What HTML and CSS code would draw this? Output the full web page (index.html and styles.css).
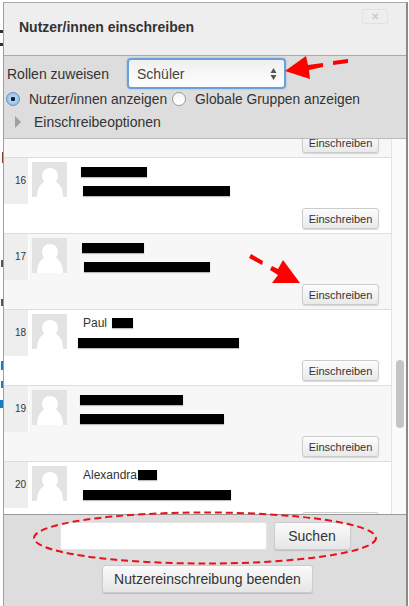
FILE: index.html
```html
<!DOCTYPE html>
<html lang="de">
<head>
<meta charset="UTF-8">
<meta name="viewport" content="width=device-width, initial-scale=1.0">
<title>Nutzer/innen einschreiben</title>
<link rel="stylesheet" href="styles.css">
</head>
<body>
<div class="page-bits">
  <i class="bit bit-a"></i>
  <i class="bit bit-b"></i>
  <i class="bit bit-c"></i>
  <i class="bit bit-d"></i>
  <i class="bit bit-e"></i>
  <i class="bit bit-f"></i>
  <i class="bit bit-g"></i>
  <i class="bit bit-h"></i>
</div>
<div class="dialog">
  <div class="dialog-head">
    <h1>Nutzer/innen einschreiben</h1>
    <span class="close">&#10005;</span>
  </div>
  <div class="toolbar">
    <div class="role-row">
      <label>Rollen zuweisen</label>
      <div class="select">
        <span>Schüler</span>
        <svg width="7" height="12" viewBox="0 0 7 12"><path d="M3.5 0 L6.5 5 H0.5 Z M3.5 12 L0.5 7 H6.5 Z" fill="#555"/></svg>
      </div>
      <svg class="arrow-role" width="68" height="28" viewBox="0 0 68 28">
        <path d="M0 16 L21 1 L23 10 L38 8 L38 12 L24 15 L25 24 Z" fill="#f00"/>
        <path d="M48 6 L63 4 L63 8 L48 10 Z" fill="#f00"/>
      </svg>
    </div>
    <div class="radio-row">
      <span class="radio checked"></span><span class="radio-label">Nutzer/innen anzeigen</span>
      <span class="radio"></span><span class="radio-label">Globale Gruppen anzeigen</span>
    </div>
    <div class="options-row">
      <span class="triangle"></span>
      <span>Einschreibeoptionen</span>
    </div>
  </div>
  <div class="list">
    <div class="list-inner">
      <div class="row-end alt">
        <button class="enrol">Einschreiben</button>
      </div>
      <div class="row">
        <div class="num">16</div>
        <svg class="avatar" viewBox="0 0 35 35"><rect width="35" height="35" fill="#e3e3e3"/><circle cx="18" cy="14" r="8" fill="#fff"/><path d="M5 35 C5 24 11 18 18 18 C25 18 31 24 31 35 Z" fill="#fff"/></svg>
        <div class="info">
          <div class="line name"><i class="bar" style="width:66px;margin-left:-2px"></i></div>
          <div class="line mail"><i class="bar" style="width:147px;margin-left:0"></i></div>
        </div>
        <button class="enrol">Einschreiben</button>
      </div>
      <div class="row alt">
        <div class="num">17</div>
        <svg class="avatar" viewBox="0 0 35 35"><rect width="35" height="35" fill="#e3e3e3"/><circle cx="18" cy="14" r="8" fill="#fff"/><path d="M5 35 C5 24 11 18 18 18 C25 18 31 24 31 35 Z" fill="#fff"/></svg>
        <div class="info">
          <div class="line name"><i class="bar" style="width:62px;margin-left:-1px"></i></div>
          <div class="line mail"><i class="bar" style="width:126px;margin-left:1px"></i></div>
        </div>
        <button class="enrol">Einschreiben</button>
        <svg class="arrow-enrol" width="54" height="32" viewBox="0 0 54 32">
          <path d="M0 4 L2 0 L14 7 L13 11 Z" fill="#f00"/>
          <path d="M21 16 L23 12 L29 15 L34 6 L51 29 L23 29 L29 21 Z" fill="#f00"/>
        </svg>
      </div>
      <div class="row">
        <div class="num">18</div>
        <svg class="avatar" viewBox="0 0 35 35"><rect width="35" height="35" fill="#e3e3e3"/><circle cx="18" cy="14" r="8" fill="#fff"/><path d="M5 35 C5 24 11 18 18 18 C25 18 31 24 31 35 Z" fill="#fff"/></svg>
        <div class="info">
          <div class="line name-text">Paul <i class="bar inline" style="width:21px;margin-left:2px"></i></div>
          <div class="line mail"><i class="bar" style="width:161px;margin-left:-5px"></i></div>
        </div>
        <button class="enrol">Einschreiben</button>
      </div>
      <div class="row alt">
        <div class="num">19</div>
        <svg class="avatar" viewBox="0 0 35 35"><rect width="35" height="35" fill="#e3e3e3"/><circle cx="18" cy="14" r="8" fill="#fff"/><path d="M5 35 C5 24 11 18 18 18 C25 18 31 24 31 35 Z" fill="#fff"/></svg>
        <div class="info">
          <div class="line name"><i class="bar" style="width:103px;margin-left:-3px"></i></div>
          <div class="line mail"><i class="bar" style="width:144px;margin-left:-3px"></i></div>
        </div>
        <button class="enrol">Einschreiben</button>
      </div>
      <div class="row">
        <div class="num">20</div>
        <svg class="avatar" viewBox="0 0 35 35"><rect width="35" height="35" fill="#e3e3e3"/><circle cx="18" cy="14" r="8" fill="#fff"/><path d="M5 35 C5 24 11 18 18 18 C25 18 31 24 31 35 Z" fill="#fff"/></svg>
        <div class="info">
          <div class="line name-text">Alexandra<i class="bar inline" style="width:19px;margin-left:1px"></i></div>
          <div class="line mail"><i class="bar" style="width:148px;margin-left:0"></i></div>
        </div>
        <button class="enrol"></button>
      </div>
    </div>
    <div class="scroll-thumb"></div>
  </div>
  <div class="dialog-foot">
    <div class="search-row">
      <input class="search" type="text">
      <button class="foot-btn search-btn">Suchen</button>
      <svg class="ellipse" width="346" height="56" viewBox="0 0 346 56"><ellipse cx="172" cy="28" rx="171" ry="25.5" fill="none" stroke="#e8101a" stroke-width="2" stroke-dasharray="7 4"/></svg>
    </div>
    <button class="foot-btn finish">Nutzereinschreibung beenden</button>
  </div>
</div>
</body>
</html>
```

FILE: styles.css
```css
html, body {
  margin: 0;
  height: 100%;
  overflow: hidden;
}
body {
  font-family: "Liberation Sans", Arial, sans-serif;
  background-color: #fff;
  color: #333;
  padding: 2px 0 0 3px;
  box-sizing: border-box;
}

/* reste der seite hinter dem dialog */
.bit {
  position: absolute;
  left: 0;
  width: 3px;
}
.bit-a { top: 30px; height: 3px; background-color: #333; }
.bit-b { top: 43px; height: 3px; background-color: #333; }
.bit-c { top: 152px; left: 2px; width: 1px; height: 11px; background-color: #8a3a2a; }
.bit-d { top: 260px; left: 1px; width: 2px; height: 7px; background-color: #555; }
.bit-e { top: 299px; left: 1px; width: 2px; height: 7px; background-color: #555; }
.bit-f { top: 361px; left: 1px; width: 2px; height: 9px; background-color: #1a7cc0; }
.bit-g { top: 381px; left: 1px; width: 2px; height: 7px; background-color: #1a7cc0; }
.bit-h { top: 400px; height: 8px; background-color: #1a7cc0; }

.dialog {
  width: 405px;
  height: 604px;
  box-sizing: border-box;
  border-left: 1px solid #a0a0a0;
  border-right: 2px solid #8a8a8a;
  border-top: 1px solid #a8a8a8;
  display: flex;
  flex-direction: column;
}
.dialog-head {
  height: 52px;
  flex: none;
  background-color: #eee;
  border-bottom: 1px solid #aaa;
  display: flex;
  justify-content: space-between;
  padding: 0 18px 0 15px;
}
.dialog-head h1 {
  margin: 14px 0 0;
  font-size: 14px;
  line-height: 20px;
  font-weight: 700;
  color: #333;
}
.close {
  width: 24px;
  height: 13px;
  margin-top: 6px;
  border: 1px solid #e2e2e2;
  border-radius: 2px;
  font-size: 10px;
  line-height: 13px;
  text-align: center;
  color: #ccc;
  font-weight: 700;
}

/* rollen und anzeige */
.toolbar {
  height: 83px;
  flex: none;
  background-color: #ddd;
  border-bottom: 1px solid #bbb;
  font-size: 14px;
  color: #333;
  padding: 1px 0 0 3px;
  box-sizing: border-box;
}
.role-row {
  display: flex;
  align-items: center;
  height: 33px;
}
.role-row label {
  width: 120px;
  font-size: 14px;
}
.select {
  width: 159px;
  height: 31px;
  flex: none;
  box-sizing: border-box;
  border: 2px solid #6c9fd8;
  border-radius: 4px;
  background: linear-gradient(#efefef, #fff);
  display: flex;
  align-items: center;
  justify-content: space-between;
  padding: 0 7px 0 8px;
  color: #444;
  box-shadow: 0 0 2px #8ab4e8;
}
.arrow-role {
  flex: none;
  margin: -9px 0 0 -1px;
}
.radio-row {
  display: flex;
  align-items: center;
  height: 20px;
  margin-top: -1px;
  font-size: 13.8px;
}
.radio {
  width: 12px;
  height: 12px;
  border-radius: 50%;
  border: 1px solid #999;
  background: linear-gradient(#f4f4f4, #fff);
  flex: none;
}
.radio.checked {
  margin-left: -1px;
  background: radial-gradient(circle, #123 0 2px, #b5d5f5 2.5px, #7fb2ea 100%);
  border-color: #6b8fb8;
}
.radio-label {
  margin-left: 9px;
  margin-right: 5px;
}
.options-row {
  display: flex;
  align-items: center;
  height: 26px;
  padding-left: 8px;
  gap: 13px;
}
.triangle {
  width: 0;
  height: 0;
  border-left: 6px solid #a0a0a0;
  border-top: 6px solid transparent;
  border-bottom: 6px solid transparent;
}

/* teilnehmerliste */
.list {
  position: relative;
  flex: 1;
  min-height: 0;
  overflow: hidden;
  background-color: #fafafa;
}
.list-inner {
  width: 387px;
  background-color: #fff;
  border-right: 1px solid #e4e4e4;
}
.row-end {
  height: 18px;
  display: flex;
  justify-content: flex-end;
  align-items: flex-start;
  padding-right: 12px;
  border-bottom: 1px solid #ddd;
}
.alt {
  background-color: #f7f7f7;
}
.row {
  height: 75px;
  position: relative;
  display: flex;
  align-items: flex-start;
  border-bottom: 1px solid #ddd;
}
.num {
  width: 22px;
  height: 46px;
  flex: none;
  padding-right: 2px;
  background-color: #eee;
  border-right: 1px solid #fff;
  font-size: 10px;
  line-height: 46px;
  text-align: right;
  color: #333;
}
.avatar {
  width: 35px;
  height: 35px;
  flex: none;
  margin: 4px 16px 0 3px;
}
.info {
  font-size: 12px;
  color: #333;
}
.line {
  height: 14px;
  line-height: 14px;
  white-space: nowrap;
}
.line.name {
  margin-top: 9px;
}
.line.name-text {
  margin-top: 6px;
}
.line.name + .mail {
  margin-top: 5px;
}
.line.name-text + .mail {
  margin-top: 8px;
}
.bar {
  display: block;
  height: 10px;
  background-color: #000;
  box-shadow: 0 1px 1px rgba(0, 0, 0, 0.25);
}
.bar.inline {
  display: inline-block;
  vertical-align: -1px;
}
.enrol {
  position: absolute;
  right: 12px;
  bottom: 4px;
  width: 77px;
  height: 21px;
  padding: 0;
  border: 1px solid #ccc;
  border-radius: 3px;
  background: linear-gradient(#fcfcfc, #e9e9e9);
  font-family: inherit;
  font-size: 11px;
  color: #333;
  box-shadow: 0 1px 1px rgba(0, 0, 0, 0.15);
}
.row-end .enrol {
  position: static;
  flex: none;
  margin-top: -7px;
}
.arrow-enrol {
  position: absolute;
  left: 245px;
  top: 20px;
}
.scroll-thumb {
  position: absolute;
  left: 392px;
  top: 221px;
  width: 8px;
  height: 68px;
  border-radius: 4px;
  background-color: #c4c4c4;
}

/* suche unten */
.dialog-foot {
  height: 92px;
  flex: none;
  background-color: #ddd;
  border-top: 1px solid #999;
  box-sizing: border-box;
  display: flex;
  flex-direction: column;
  align-items: center;
}
.search-row {
  position: relative;
  display: flex;
  gap: 7px;
  margin: 7px 0 0;
}
.search {
  width: 207px;
  height: 28px;
  box-sizing: border-box;
  border: 1px solid #e4e4e4;
  border-radius: 3px;
  background-color: #fff;
  padding: 0;
}
.foot-btn {
  height: 28px;
  padding: 0;
  border: 1px solid #ccc;
  border-radius: 3px;
  background: linear-gradient(#fafafa, #e6e6e6);
  font-family: inherit;
  font-size: 14px;
  color: #333;
  box-shadow: 0 1px 1px rgba(0, 0, 0, 0.15);
}
.search-btn {
  width: 77px;
}
.finish {
  width: 211px;
  margin: 15px 0 0 5px;
}
.ellipse {
  position: absolute;
  left: -27px;
  top: -12px;
}
```
